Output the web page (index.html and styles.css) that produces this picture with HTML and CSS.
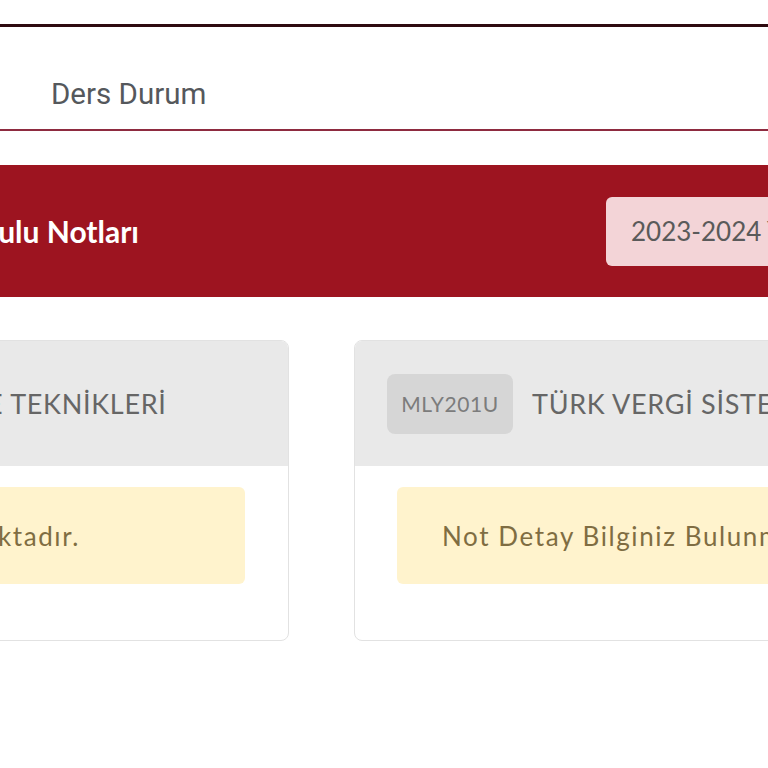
FILE: index.html
```html
<!DOCTYPE html>
<html lang="tr">
<head>
<meta charset="utf-8">
<title>Ders Durum</title>
<link rel="stylesheet" href="styles.css">
</head>
<body>
<div class="topnav"></div>
<nav class="tabs">
  <a class="tab">Ders Durum</a>
</nav>
<main class="wrap">
  <section class="band">
    <h1 class="band-title">Dönem Sonu Yaz Okulu Notları</h1>
    <div class="term">2023-2024 Yaz Okulu</div>
  </section>
  <section class="cards">
    <article class="card">
      <header class="card-head">
        <span class="code">MLY204U</span>
        <span class="course">MALİ TABLO İNCELEME TEKNİKLERİ</span>
      </header>
      <div class="card-body">
        <div class="alert">Not Detay Bilginiz Bulunmamaktadır.</div>
      </div>
    </article>
    <article class="card">
      <header class="card-head">
        <span class="code">MLY201U</span>
        <span class="course">TÜRK VERGİ SİSTEMİ</span>
      </header>
      <div class="card-body">
        <div class="alert">Not Detay Bilginiz Bulunmamaktadır.</div>
      </div>
    </article>
  </section>
</main>
</body>
</html>
```
FILE: styles.css
```css
html, body {
  margin: 0;
  padding: 0;
}
body {
  width: 768px;
  height: 768px;
  overflow: hidden;
  background: #ffffff;
  font-family: "Lato", "Noto Sans", sans-serif;
}
.topnav {
  height: 24px;
  border-bottom: 3px solid #2e0a10;
}
.tabs {
  height: 104px;
  box-sizing: border-box;
  border-bottom: 2px solid #8e2b40;
  display: flex;
  align-items: flex-end;
  padding-left: 51px;
  padding-bottom: 15px;
}
.tab {
  font-family: "Roboto", "Liberation Sans", sans-serif;
  font-size: 29.5px;
  line-height: 40px;
  color: #55585c;
}
.wrap {
  margin-left: -482px;
  width: 1578px;
}
.band {
  margin-top: 34px;
  height: 132px;
  background: #9d1420;
  display: flex;
  align-items: center;
  padding: 0 40px 0 209px;
}
.band-title {
  flex: 1;
  margin: 0;
  font-size: 30px;
  font-weight: 700;
  color: #ffffff;
}
.term {
  flex-shrink: 0;
  width: 400px;
  height: 69px;
  background: #f3d4d7;
  border-radius: 6px;
  display: flex;
  align-items: center;
  padding: 0 25px;
  font-size: 26px;
  color: #5a5a5a;
}
.cards {
  margin-top: 43px;
  display: flex;
  gap: 65px;
}
.card {
  flex-shrink: 0;
  width: 771px;
  border: 1px solid #e2e2e2;
  border-radius: 8px;
  overflow: hidden;
  box-sizing: border-box;
}
.card-head {
  height: 125px;
  background: #e9e9e9;
  display: flex;
  align-items: center;
  padding-left: 32px;
  gap: 19px;
}
.code {
  flex-shrink: 0;
  width: 126px;
  height: 60px;
  border-radius: 8px;
  background: #d6d6d6;
  color: #7c7c7c;
  font-size: 21px;
  letter-spacing: 0.6px;
  display: flex;
  align-items: center;
  justify-content: center;
}
.course {
  font-size: 27px;
  color: #666666;
  letter-spacing: 0.7px;
  white-space: nowrap;
}
.card-body {
  padding: 21px 43px 56px 42px;
}
.alert {
  height: 97px;
  background: #fff3cd;
  border-radius: 6px;
  display: flex;
  align-items: center;
  padding-left: 45px;
  font-size: 26px;
  letter-spacing: 1.6px;
  color: #7f6d42;
  box-sizing: border-box;
  white-space: nowrap;
}
```
